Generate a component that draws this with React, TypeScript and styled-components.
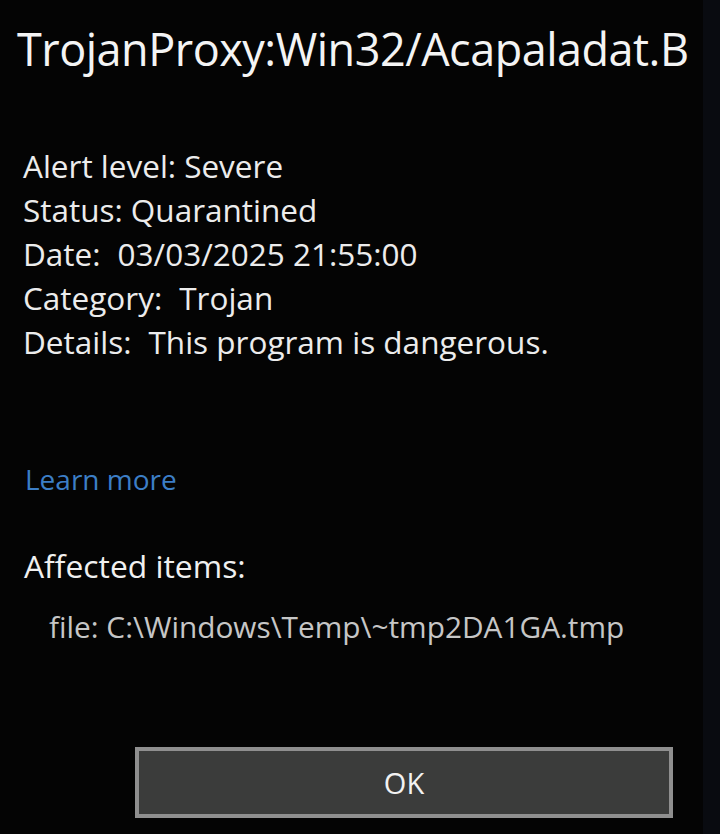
import React from "react";
import styled, { createGlobalStyle } from "styled-components";

const GlobalStyle = createGlobalStyle`
  html, body {
    margin: 0;
    padding: 0;
    background: #040404;
  }
  body {
    font-family: "Open Sans", "Noto Sans", "Liberation Sans", sans-serif;
    -webkit-font-smoothing: antialiased;
  }
`;

const Screen = styled.div`
  display: flex;
  width: 720px;
  height: 834px;
  overflow: hidden;
  background: #040404;
`;

const Dialog = styled.main`
  flex: 1;
  display: flex;
  flex-direction: column;
  padding-top: 19px;
`;

const EdgeStrip = styled.div`
  width: 17px;
  background: #090b10;
`;

const Title = styled.h1`
  margin: 0;
  padding-left: 17px;
  font-size: 45px;
  line-height: 60px;
  font-weight: 400;
  letter-spacing: -0.5px;
  color: #f4f4f4;
  white-space: nowrap;
`;

const InfoList = styled.dl`
  margin: 65px 0 0;
  padding-left: 23px;
  display: flex;
  flex-direction: column;
`;

const InfoRow = styled.div<{ $wide?: boolean }>`
  display: flex;
  gap: ${(p) => (p.$wide ? "17px" : "8px")};
  font-size: 31.5px;
  line-height: 44px;
  color: #ececec;
  white-space: nowrap;
`;

const Label = styled.dt`
  margin: 0;
`;

const Value = styled.dd`
  margin: 0;
`;

const LearnMore = styled.a`
  align-self: flex-start;
  margin: 95px 0 0 25px;
  font-size: 28px;
  line-height: 40px;
  color: #3c7ec6;
  text-decoration: none;
  cursor: pointer;
`;

const SectionHeading = styled.h2`
  margin: 45px 0 0;
  padding-left: 24px;
  font-size: 31.8px;
  line-height: 44px;
  font-weight: 400;
  color: #f0f0f0;
`;

const ItemLine = styled.p`
  margin: 17px 0 0;
  padding-left: 49px;
  font-size: 29.8px;
  line-height: 44px;
  color: #c6c6c6;
  white-space: nowrap;
`;

const Footer = styled.div`
  display: flex;
  margin-top: 98px;
  padding-left: 135px;
`;

const OkButton = styled.button`
  width: 538px;
  height: 71px;
  box-sizing: border-box;
  border: 4px solid #8f8f8f;
  background: #3b3c3b;
  color: #f2f2f2;
  font-family: inherit;
  font-size: 29px;
  line-height: 1;
  padding: 0;
  cursor: pointer;
`;

const details: { label: string; value: string; wide?: boolean }[] = [
  { label: "Alert level:", value: "Severe" },
  { label: "Status:", value: "Quarantined" },
  { label: "Date:", value: "03/03/2025 21:55:00", wide: true },
  { label: "Category:", value: "Trojan", wide: true },
  { label: "Details:", value: "This program is dangerous.", wide: true },
];

export default function App() {
  return (
    <>
      <GlobalStyle />
      <Screen>
        <Dialog>
          <Title>TrojanProxy:Win32/Acapaladat.B</Title>
          <InfoList>
            {details.map((d) => (
              <InfoRow key={d.label} $wide={d.wide}>
                <Label>{d.label}</Label>
                <Value>{d.value}</Value>
              </InfoRow>
            ))}
          </InfoList>
          <LearnMore>Learn more</LearnMore>
          <SectionHeading>Affected items:</SectionHeading>
          <ItemLine>file: C:\Windows\Temp\~tmp2DA1GA.tmp</ItemLine>
          <Footer>
            <OkButton>OK</OkButton>
          </Footer>
        </Dialog>
        <EdgeStrip />
      </Screen>
    </>
  );
}
